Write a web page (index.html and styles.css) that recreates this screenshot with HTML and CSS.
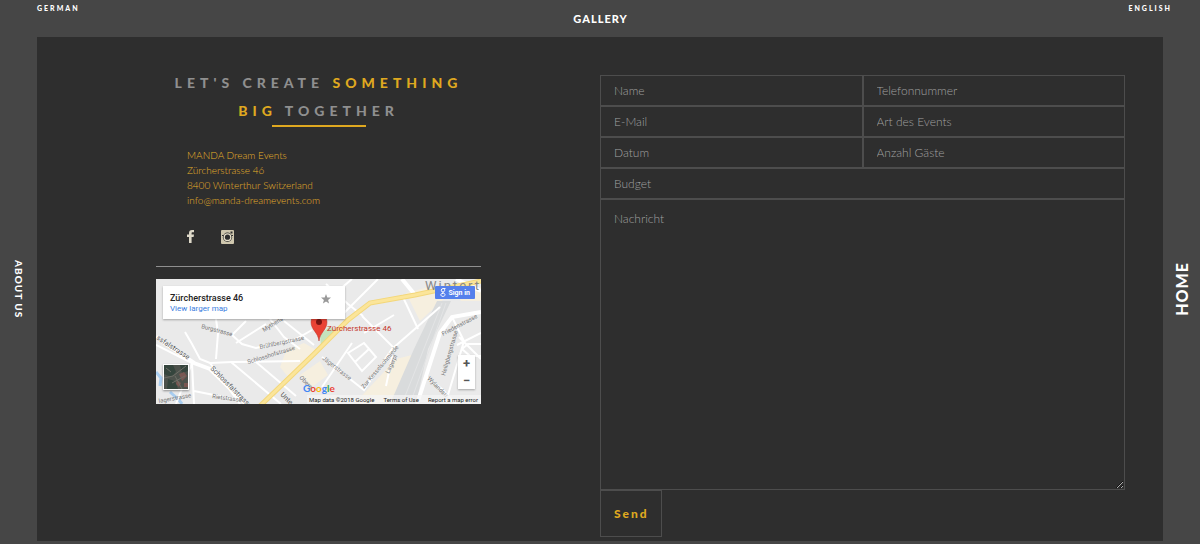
FILE: index.html
```
<!DOCTYPE html>
<html lang="de">
<head>
    <meta charset="utf-8">
    <title>MANDA Dream Events</title>
    <link rel="stylesheet" href="styles.css">
</head>
<body>
    <header class="topbar">
        <a class="lang" href="#de">GERMAN</a>
        <a class="gallery-link" href="#gallery">GALLERY</a>
        <a class="lang lang-right" href="#en">ENGLISH</a>
    </header>

    <nav class="side side-left"><a href="#about">ABOUT US</a></nav>

    <main class="content">
        <section class="contact">
            <h1>LET'S CREATE <b>SOMETHING BIG</b> TOGETHER</h1>
            <div class="underline"></div>
            <address>
                MANDA Dream Events<br>
                Zürcherstrasse 46<br>
                8400 Winterthur Switzerland<br>
                <a href="mailto:info@manda-dreamevents.com">info@manda-dreamevents.com</a>
            </address>
            <div class="social">
                <a href="#facebook" aria-label="Facebook">
                    <svg width="7" height="13" viewBox="0 0 7 13"><path fill="#ddd8c8" d="M2 13V7H0V4.600h2V3c0-2 1-3 3-3h2v2.300H5.600C4.800 2.300 4.600 2.600 4.600 3.300v1.300H7L6.600 7h-2v6z"/></svg>
                </a>
                <a href="#instagram" aria-label="Instagram">
                    <svg width="13" height="14" viewBox="0 0 13 14">
                        <rect width="13" height="14" rx="1" fill="#cfc7ae"/>
                        <path fill="#2e2e2e" d="M1 5h2v1H1zM10 5h2v1h-2zM9.500 1.500h2v2h-2z"/>
                        <circle cx="6.500" cy="7.200" r="4.600" fill="#2e2e2e"/>
                        <circle cx="6.500" cy="7.200" r="3.900" fill="#e6dfca"/>
                        <circle cx="6.500" cy="7.200" r="2.600" fill="#2e2e2e"/>
                    </svg>
                </a>
            </div>
            <hr>
            <div class="map">
                <svg class="map-canvas" viewBox="0 0 325 125" preserveAspectRatio="xMidYMid slice">
                    <rect width="325" height="125" fill="#eaeaea"/>
                    <!-- areas -->
                    <path fill="#f6efdf" d="M130 72l18-8 14 8-30 26-8-10zM240 80l16-4-12 49h-46zM250 14l30-8 8 14-24 22zM296 8h29v14h-20zM144 96l20-14 8 14-16 12z"/>
                    <path fill="#d9dbdc" d="M281 22h14L272 70l-12 55h-26l24-55z"/>
                    <path fill="none" stroke="#e3e4e5" d="M286 24L246 125M290 24L254 125"/>
                    <path fill="#c5e3bd" d="M164 56l10-9 5 5-14 15z"/>
                    <path fill="none" stroke="#a8cdf0" stroke-width="3" d="M0 93l5 6-1 8M14 113l9 8 3 4"/>
                    <!-- small streets -->
                    <g fill="none" stroke="#fff" stroke-width="2">
                        <path d="M29 53l7 12 8 15 10 4 22-1 68-1"/>
                        <path d="M60 40l2 14-2 26M76 56l10 9 14 4 40-9 16-9M76 56l14-14M80 64l30-19M114 40l14 18 16 12"/>
                        <path d="M75 83l50 42M54 84l30 41M0 66l36 18-16 41M36 84l2 41M38 112l40 8"/>
                        <path d="M100 83l40 34M128 42l30 24M166 78l42 33 28-41 48-42"/>
                        <path d="M170 5l22 20 15 12M196 0l-14 12M222 0l-34 34M206 37l32 32-8 38M246 16l16 34M208 54l30-18M192 74l14 18 14-14-12-14zM199 83l14-13M166 108l30-44"/>
                        <path d="M270 98l16 12 14 15M301 66l24-12M303 58l22 22M296 38l12 24-16 54M325 65h-13l-6 5 8 7h11"/>
                    </g>
                    <g fill="none" stroke="#fff" stroke-width="4">
                        <path d="M0 58l38 26 16 6 36 35"/>
                        <path d="M261 125l23-71 12-16 29-5"/>
                        <path d="M246 0l14 17M300 0l25 12"/>
                    </g>
                    <!-- main road -->
                    <path fill="none" stroke="#f3d77a" stroke-width="5" d="M104 127l55-53 33-33 22-17 45-8 66-14"/>
                    <path fill="none" stroke="#fbe59a" stroke-width="3" d="M104 127l55-53 33-33 22-17 45-8 66-14"/>
                    <!-- street names -->
                    <g class="street">
                        <text transform="translate(45 49) rotate(15)">Burgstrasse</text>
                        <text transform="translate(108 53) rotate(-32)">Mythenstr</text>
                        <text transform="translate(104 70) rotate(-12)">Brühlbergstrasse</text>
                        <text transform="translate(92 85) rotate(-17)">Schlosshofstrasse</text>
                        <text transform="translate(166 80) rotate(38)">Jägerstrasse</text>
                        <text transform="translate(208 110) rotate(-50)">Zur Kesselschmiede</text>
                        <text transform="translate(233 95) rotate(-65)">Lagerpl</text>
                        <text transform="translate(289 97) rotate(-74)">Heiligbergstrasse</text>
                        <text transform="translate(287 57) rotate(-28)">Friedenstrasse</text>
                        <text transform="translate(271 100) rotate(45)">Wylandstr</text>
                        <text transform="translate(143 99) rotate(45)">Obere</text>
                        <text transform="translate(3 124) rotate(-10)">lagerstrasse</text>
                        <text transform="translate(56 119) rotate(8)">Rietstrasse</text>
                    </g>
                    <g class="street street-big">
                        <text transform="translate(0 60) rotate(33)">ssfalstrasse</text>
                        <text transform="translate(54 90) rotate(45)">Schlossfalstrasse</text>
                        <text transform="translate(124 116) rotate(45)">Unte</text>
                    </g>
                    <text class="city" x="269" y="11">Wintert</text>
                    <!-- pin -->
                    <path fill="#ea4335" stroke="#b93226" stroke-width=".5" d="M163 62c-1-9-8-11-8-19a8 8 0 0 1 16 0c0 8-7 10-8 19z"/>
                    <circle cx="163" cy="43" r="3" fill="#7a1512"/>
                    <text class="pin-name" x="171" y="52">Zürcherstrasse 46</text>
                    <text class="google" x="147" y="113"><tspan fill="#4285f4">G</tspan><tspan fill="#ea4335">o</tspan><tspan fill="#fbbc05">o</tspan><tspan fill="#4285f4">g</tspan><tspan fill="#34a853">l</tspan><tspan fill="#ea4335">e</tspan></text>
                </svg>
                <div class="map-card">
                    <div>
                        <strong>Zürcherstrasse 46</strong>
                        <a href="#map">View larger map</a>
                    </div>
                    <svg width="10" height="10" viewBox="0 0 10 10"><path fill="#999" d="M5 0l1.300 3.500 3.700.1-2.900 2.300 1 3.600L5 7.400 1.900 9.500l1-3.600L0 3.600l3.700-.1z"/></svg>
                </div>
                <button class="sign-in" type="button">
                    <svg width="6" height="9" viewBox="0 0 6 9"><path fill="none" stroke="#fff" d="M5.500.6H3A1.700 1.700 0 1 0 3 4a1.700 1.700 0 0 0 .8-3.200M3 4c-.6.600 0 .9.800 1.200C6 6.200 5 8.400 3 8.400S0 6.500 1.500 5.700L3.400 5.300"/></svg>
                    Sign in
                </button>
                <div class="map-zoom">
                    <button type="button">+</button>
                    <button type="button">−</button>
                </div>
                <button class="satellite" type="button" aria-label="Satellite">
                    <svg viewBox="0 0 24 24">
                        <rect width="24" height="24" fill="#4d524c"/>
                        <path fill="#35453d" d="M0 0h9l3 7-5 5-7-3zM4 14l7 2 3 8H3zM16 0h8v6l-6 2z"/>
                        <path fill="#795752" d="M15 9l5-2 3 4-5 5zM13 15l4 3-2 4-3-3zM20 18h4v4h-4z"/>
                        <path fill="none" stroke="#6d6e66" d="M0 13l9-2L22 1M11 11l7 13M2 3l5 4M8 18l13-7"/>
                    </svg>
                </button>
                <div class="map-footer">
                    <span>Map data ©2018 Google</span>
                    <a href="#terms">Terms of Use</a>
                    <a href="#report">Report a map error</a>
                </div>
            </div>
        </section>

        <form class="request">
            <input type="text" placeholder="Name" aria-label="Name">
            <input type="tel" placeholder="Telefonnummer" aria-label="Telefonnummer">
            <input type="email" placeholder="E-Mail" aria-label="E-Mail">
            <input type="text" placeholder="Art des Events" aria-label="Art des Events">
            <input type="text" placeholder="Datum" aria-label="Datum">
            <input type="text" placeholder="Anzahl Gäste" aria-label="Anzahl Gäste">
            <input class="wide" type="text" placeholder="Budget" aria-label="Budget">
            <textarea class="wide" placeholder="Nachricht" aria-label="Nachricht"></textarea>
            <button class="send" type="submit">Send</button>
        </form>
    </main>

    <nav class="side side-right"><a href="#home">HOME</a></nav>
</body>
</html>
```

FILE: styles.css
```
* {
    box-sizing: border-box;
}

body {
    margin: 0;
    min-height: 100vh;
    display: grid;
    grid-template-columns: 37px 1fr 37px;
    grid-template-rows: 37px 1fr;
    padding-bottom: 3px;
    background-color: #464646;
    font-family: Lato, "Liberation Sans", sans-serif;
    color: #fff;
}

a {
    color: inherit;
    text-decoration: none;
}

/* top links */
.topbar {
    grid-column: 1 / -1;
    display: grid;
    grid-template-columns: 1fr auto 1fr;
    padding: 3px 28px 0 37px;
    font-weight: 900;
}

.lang {
    font-size: 7px;
    line-height: 10px;
    letter-spacing: 2px;
}

.lang-right {
    text-align: right;
}

.gallery-link {
    padding: 8px 8px 0 0;
    font-size: 11px;
    line-height: 15px;
    letter-spacing: 1px;
}

/* side links */
.side {
    display: flex;
    align-items: center;
    justify-content: center;
    font-weight: 900;
    writing-mode: vertical-rl;
}

.side-left {
    font-size: 10px;
    letter-spacing: 1px;
}

.side-right {
    font-size: 16px;
    letter-spacing: 1px;
}

.side-right a {
    transform: rotate(180deg);
}

.content {
    display: grid;
    grid-template-columns: 1fr 1fr;
    background-color: #2e2e2e;
}

/* left column */
.contact {
    width: 100%;
    max-width: 325px;
    margin: 0 auto;
    padding-top: 32px;
}

h1 {
    margin: 0;
    padding: 0 14px;
    font-size: 14px;
    font-weight: 900;
    line-height: 28px;
    letter-spacing: 5px;
    text-align: center;
    color: #8f8f8f;
}

h1 b {
    color: #dfa820;
}

.underline {
    width: 94px;
    height: 2px;
    margin: 0 auto;
    background-color: #dfa820;
}

address {
    margin: 21px 0 0 31px;
    font-size: 10px;
    font-style: normal;
    font-weight: 300;
    line-height: 15px;
    color: #e5b02a;
}

.social {
    display: flex;
    gap: 27px;
    margin: 22px 0 0 31px;
}

.social svg {
    display: block;
}

hr {
    margin: 22px 0 12px;
    border: 0;
    border-top: 1px solid #8f8f8f;
}

/* map */
.map {
    position: relative;
    height: 125px;
    overflow: hidden;
    font-family: Roboto, "Liberation Sans", sans-serif;
    color: #222;
}

.map button {
    border: 0;
    font-family: inherit;
}

.map-canvas {
    display: block;
    width: 100%;
    height: 100%;
}

.street {
    font-size: 6px;
    fill: #777;
}

.street-big {
    font-size: 7px;
    fill: #555;
}

.city {
    font-size: 13px;
    letter-spacing: 2px;
    fill: #888;
}

.pin-name {
    font-size: 8px;
    fill: #c5352b;
}

.google {
    font-family: Lato, sans-serif;
    font-size: 10px;
    font-weight: 700;
}

.map-card {
    position: absolute;
    top: 7px;
    left: 7px;
    width: 182px;
    display: flex;
    justify-content: space-between;
    padding: 6px 14px 5px 7px;
    background-color: #fff;
    box-shadow: 0 1px 2px rgba(0, 0, 0, 0.3);
}

.map-card strong,
.map-card a {
    display: block;
    font-size: 9px;
    font-weight: 500;
    line-height: 12px;
}

.map-card a {
    font-size: 8px;
    font-weight: 400;
    line-height: 10px;
    color: #3a7de0;
}

.map-card svg {
    margin-top: 2px;
}

.sign-in {
    position: absolute;
    top: 7px;
    right: 6px;
    display: flex;
    align-items: center;
    gap: 2px;
    height: 13px;
    padding: 0 5px;
    border-radius: 1px;
    background-color: #5580ec;
    font-size: 7px;
    font-weight: 700;
    color: #fff;
}

.map-zoom {
    position: absolute;
    right: 6px;
    bottom: 15px;
    width: 17px;
    background-color: #fff;
    box-shadow: 0 1px 2px rgba(0, 0, 0, 0.3);
}

.map-zoom button {
    display: block;
    width: 100%;
    height: 17px;
    padding: 0;
    background: none;
    font-size: 13px;
    font-weight: 700;
    line-height: 17px;
    color: #555;
}

.satellite {
    position: absolute;
    left: 7px;
    bottom: 14px;
    width: 26px;
    height: 26px;
    padding: 1px;
    background-color: #fff;
    box-shadow: 0 1px 2px rgba(0, 0, 0, 0.4);
}

.satellite svg {
    display: block;
}

.map-footer {
    position: absolute;
    right: 0;
    bottom: 0;
    display: flex;
    gap: 9px;
    padding: 0 3px 0 2px;
    background-color: rgba(245, 245, 245, 0.7);
    font-size: 6px;
    line-height: 9px;
    white-space: nowrap;
}

/* form */
.request {
    display: grid;
    grid-template-columns: 1fr 1fr;
    grid-auto-rows: min-content;
    margin: 38px 38px 4px 0;
}

.request input,
.request textarea,
.send {
    min-width: 0;
    margin: 0;
    border: 1px solid #4d4d4d;
    border-radius: 0;
    background: none;
    font-family: inherit;
    font-size: 12px;
    font-weight: 300;
    color: #ccc;
}

.request input {
    height: 31px;
    padding: 0 13px;
}

.request ::placeholder {
    color: #a0a0a0;
    opacity: 1;
}

.request .wide {
    grid-column: 1 / -1;
}

.request textarea {
    height: 291px;
    padding: 11px 13px;
    line-height: 15px;
    resize: vertical;
}

.request .send {
    justify-self: start;
    height: 47px;
    padding: 0 12px 0 13px;
    font-weight: 900;
    letter-spacing: 2px;
    color: #dfa820;
}
```
